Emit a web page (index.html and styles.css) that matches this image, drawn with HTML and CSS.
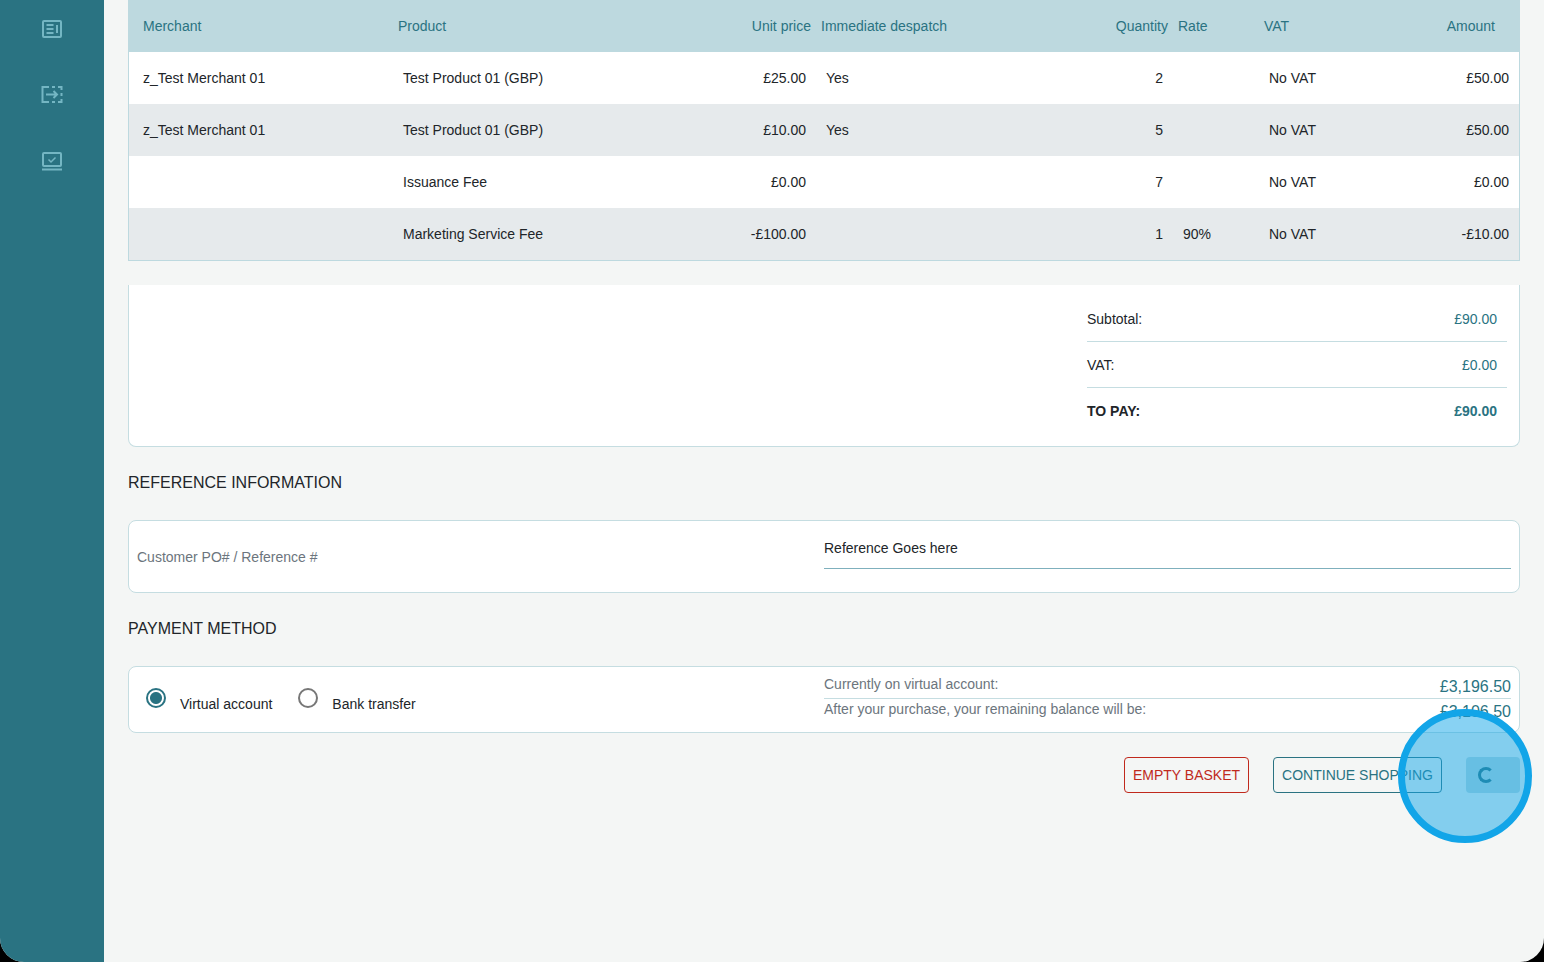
FILE: index.html
```html
<!DOCTYPE html>
<html lang="en">
<head>
<meta charset="utf-8">
<title>Basket</title>
<link rel="stylesheet" href="styles.css">
</head>
<body>
<div class="app">
  <aside class="sidebar">
    <svg class="nav-icon" viewBox="0 0 22 20" fill="none" stroke="currentColor" stroke-width="2"><rect x="2" y="2" width="18" height="16" rx="1"/><path d="M5.5 6h7M5.5 10h7M5.5 14h7M16 6v8"/></svg>
    <svg class="nav-icon" viewBox="0 0 22 20" fill="none" stroke="currentColor" stroke-width="2"><path d="M8 2H1.500v15H8M11 2h3M17 2h3.500v3M20.500 8v3M20.500 14v3H17M11 17h3M5 9.500h11M12.500 6l3.500 3.500-3.500 3.500"/></svg>
    <svg class="nav-icon" viewBox="0 0 22 20" fill="none" stroke="currentColor" stroke-width="2"><rect x="2" y="2" width="18" height="13" rx="1"/><path d="M1 18.500h20" /><path d="M7.500 8.500l2.500 2.500 4.500-4.500" stroke-width="1.500"/></svg>
  </aside>
  <main class="content">
    <table class="items">
      <thead>
        <tr>
          <th class="c1">Merchant</th><th class="c2">Product</th><th class="c3 num">Unit price</th><th class="c4">Immediate despatch</th><th class="c5 num">Quantity</th><th class="c6">Rate</th><th class="c7">VAT</th><th class="c8 num">Amount</th>
        </tr>
      </thead>
      <tbody>
        <tr><td class="first">z_Test Merchant 01</td><td>Test Product 01 (GBP)</td><td class="num">£25.00</td><td>Yes</td><td class="num">2</td><td></td><td>No VAT</td><td class="num">£50.00</td></tr>
        <tr><td class="first">z_Test Merchant 01</td><td>Test Product 01 (GBP)</td><td class="num">£10.00</td><td>Yes</td><td class="num">5</td><td></td><td>No VAT</td><td class="num">£50.00</td></tr>
        <tr><td class="first"></td><td>Issuance Fee</td><td class="num">£0.00</td><td></td><td class="num">7</td><td></td><td>No VAT</td><td class="num">£0.00</td></tr>
        <tr><td class="first"></td><td>Marketing Service Fee</td><td class="num">-£100.00</td><td></td><td class="num">1</td><td>90%</td><td>No VAT</td><td class="num">-£10.00</td></tr>
      </tbody>
    </table>

    <section class="card totals">
      <div class="totals-list">
        <div class="total-row"><span>Subtotal:</span><span class="money">£90.00</span></div>
        <div class="total-row"><span>VAT:</span><span class="money">£0.00</span></div>
        <div class="total-row strong"><span>TO PAY:</span><span class="money">£90.00</span></div>
      </div>
    </section>

    <h2 class="heading first-heading">REFERENCE INFORMATION</h2>
    <section class="card reference">
      <span class="ref-label">Customer PO# / Reference #</span>
      <div class="ref-input">Reference Goes here</div>
    </section>

    <h2 class="heading second-heading">PAYMENT METHOD</h2>
    <section class="card payment">
      <div class="methods">
        <span class="radio checked"></span><span class="method-label">Virtual account</span>
        <span class="radio"></span><span class="method-label">Bank transfer</span>
      </div>
      <div class="balances">
        <div class="balance upper"><span>Currently on virtual account:</span><span class="balance-value">£3,196.50</span></div>
        <div class="balance"><span>After your purchase, your remaining balance will be:</span><span class="balance-value">£3,106.50</span></div>
      </div>
    </section>

    <div class="actions">
      <button class="btn danger">EMPTY BASKET</button>
      <button class="btn outline">CONTINUE SHOPPING</button>
      <button class="btn loading"><span class="spinner"></span></button>
    </div>
    <div class="highlight"></div>
  </main>
</div>
</body>
</html>
```

FILE: styles.css
```css
* { box-sizing: border-box; }
html, body { margin: 0; height: 100%; background: #000; overflow: hidden; }
body { font-family: "Liberation Sans", Arial, sans-serif; font-size: 14px; color: #212529; }
.app { display: flex; height: 962px; border-radius: 0 0 24px 24px; overflow: hidden; background: #f4f6f5; }
.sidebar { flex: 0 0 104px; background: #2a7382; display: flex; flex-direction: column; align-items: center; gap: 44px; padding-top: 18px; color: #74b6c3; }
.nav-icon { width: 22px; height: 22px; }
.content { position: relative; flex: 1; padding: 0 24px; }

.items { width: 1392px; border-collapse: separate; border-spacing: 0; table-layout: fixed; border: solid #bdd9df; border-width: 0 1px 1px; background: #fff; }
.items th { height: 52px; background: #bdd9df; color: #2a7382; font-weight: 400; text-align: left; padding: 0 5px; }
.items td { height: 52px; padding: 0 10px; }
.items th.c1 { padding-left: 14px; }
.items td.first { padding-left: 14px; }
.items th.c8 { padding-right: 24px; }
.items .num { text-align: right; }
.items tbody tr:nth-child(even) td { background: #e6eaec; }
.c1 { width: 264px; }
.c2 { width: 307px; }
.c3 { width: 116px; }
.c4 { width: 274px; }
.c5 { width: 83px; }
.c6 { width: 86px; }
.c7 { width: 141px; }
.c8 { width: 119px; }

.card { background: #fff; border: 1px solid #c5dde1; border-radius: 8px; }
.totals { margin-top: 24px; height: 162px; border-top: 0; border-radius: 0 0 8px 8px; display: flex; justify-content: flex-end; padding: 11px 12px 0 0; }
.totals-list { width: 420px; }
.total-row { display: flex; justify-content: space-between; align-items: center; height: 46px; padding-right: 10px; border-bottom: 1px solid #c5dde1; }
.total-row:last-child { border-bottom: 0; }
.total-row.strong { font-weight: 700; }
.money { color: #2a7382; }

.heading { margin: 0; font-size: 16px; font-weight: 400; line-height: 20px; color: #212529; }
.first-heading { padding: 26px 0 27px; }
.second-heading { padding: 26px 0 27px; }

.reference { height: 73px; display: flex; padding: 0 8px; }
.ref-label { width: 687px; align-self: center; color: #6c757d; }
.ref-input { flex: 1; height: 48px; padding-top: 19px; line-height: 16px; border-bottom: 1px solid #7fb0bd; }

.payment { height: 67px; display: flex; padding: 0 8px 0 17px; }
.methods { width: 678px; display: flex; align-items: flex-start; padding-top: 21px; }
.radio { width: 20px; height: 20px; border: 2px solid #777; border-radius: 50%; background: #fff; flex: none; }
.radio.checked { border-color: #2a7382; background: radial-gradient(circle, #2a7382 0 5.500px, #fff 6.500px); }
.method-label { margin: 8px 26px 0 14px; line-height: 16px; }
.balances { flex: 1; padding-top: 7px; }
.balance { display: flex; justify-content: space-between; height: 25px; color: #6c757d; line-height: 20px; }
.balance.upper { border-bottom: 1px solid #c5dde1; }
.balance-value { color: #2a7382; font-size: 16px; line-height: 25px; }

.actions { display: flex; justify-content: flex-end; gap: 24px; margin-top: 24px; }
.btn { height: 36px; border-radius: 4px; background: transparent; font: 14px "Liberation Sans", Arial, sans-serif; padding: 0 8px; }
.danger { border: 1px solid #c0291c; color: #c0291c; }
.outline { border: 1px solid #2a7382; color: #2a7382; }
.loading { width: 54px; border: 0; background: #bdd9df; text-align: left; padding-left: 12px; }
.spinner { display: block; width: 16px; height: 16px; border: 3px solid #2a7382; border-right-color: transparent; border-radius: 50%; }

.highlight { position: absolute; left: 1294px; top: 709px; width: 134px; height: 134px; border-radius: 50%; border: 7px solid #12a5e8; background: rgba(18, 165, 232, .5); }
```
